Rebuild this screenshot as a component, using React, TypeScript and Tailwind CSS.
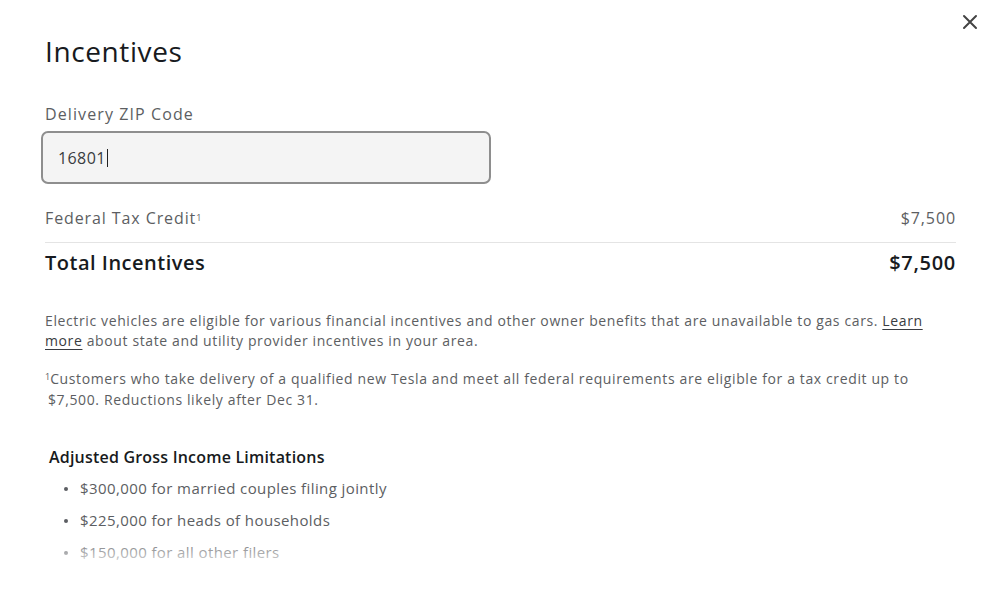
import React from "react";

const font = { fontFamily: '"Open Sans", "Noto Sans", Arial, sans-serif' };

export default function App() {
  return (
    <div className="relative w-[1000px] h-[600px] overflow-hidden bg-white" style={font}>
      <button className="absolute right-[21px] top-[13px] w-[18px] h-[18px] flex items-center justify-center text-[#444]" aria-label="Close">
        <svg width="16" height="16" viewBox="0 0 16 16" fill="none" stroke="currentColor" strokeWidth="2" strokeLinecap="round">
          <path d="M2 2 L14 14 M14 2 L2 14" />
        </svg>
      </button>

      <div className="pl-[45px] pr-[44px] pt-[34px]">
        <h1 className="text-[28px] leading-[34px] font-medium text-[#171a20] tracking-[0.6px]">Incentives</h1>

        <label className="block mt-[36px] text-[16px] leading-[20px] font-medium text-[#5c5e62] tracking-[1.1px]">Delivery ZIP Code</label>
        <div className="mt-[7px] -ml-[4px] w-[450px] h-[53px] rounded-[7px] border-2 border-[#8e8e8e] bg-[#f4f4f4] flex items-center pl-[15px]">
          <span className="text-[16px] font-medium text-[#393c41] tracking-[0.4px]">16801</span>
          <span className="w-[1.5px] h-[18px] bg-[#222] ml-[1px]" />
        </div>

        <div className="mt-[24px] flex justify-between items-center h-[20px] text-[16px] text-[#5c5e62] tracking-[0.9px]">
          <span>
            Federal Tax Credit<sup className="text-[9px] relative -top-[3px] tracking-normal">1</sup>
          </span>
          <span>$7,500</span>
        </div>
        <div className="mt-[14px] h-px bg-[#e4e4e4]" />
        <div className="mt-[8px] flex justify-between items-center h-[24px] text-[20px] font-semibold text-[#171a20] tracking-[0.5px]">
          <span>Total Incentives</span>
          <span className="font-semibold tracking-[0.7px]">$7,500</span>
        </div>

        <p className="mt-[36px] text-[14px] leading-[20px] text-[#5c5e62] tracking-[0.62px] pr-[30px]">
          Electric vehicles are eligible for various financial incentives and other owner benefits that are unavailable to gas cars.{" "}
          <a className="underline underline-offset-[3px] decoration-[1px] text-[#393c41]">Learn more</a> about state and utility provider incentives in your area.
        </p>
        <p className="mt-[17px] text-[14px] leading-[21px] text-[#5c5e62] tracking-[0.62px] pr-[40px]">
          <sup className="text-[9px] tracking-normal">1</sup>Customers who take delivery of a qualified new Tesla and meet all federal requirements are eligible for a tax credit up to{" "}
          <span className="ml-[3px]">$7,500. Reductions likely after Dec 31.</span>
        </p>

        <h2 className="mt-[37px] ml-[4px] text-[16px] leading-[20px] font-semibold text-[#171a20] tracking-[0.2px]">Adjusted Gross Income Limitations</h2>
        <ul className="mt-[11px] ml-[19px] flex flex-col gap-[11px] text-[15px] leading-[21px] text-[#5c5e62] tracking-[0.4px]">
          {["$300,000 for married couples filing jointly", "$225,000 for heads of households", "$150,000 for all other filers"].map((t) => (
            <li key={t} className="flex items-center">
              <span className="w-[4px] h-[4px] rounded-full bg-[#5c5e62] mr-[12px]" />
              {t}
            </li>
          ))}
        </ul>
      </div>

      <div className="absolute left-0 right-0 top-[536px] bottom-0 bg-gradient-to-b from-white/0 to-white to-55%" />
    </div>
  );
}
